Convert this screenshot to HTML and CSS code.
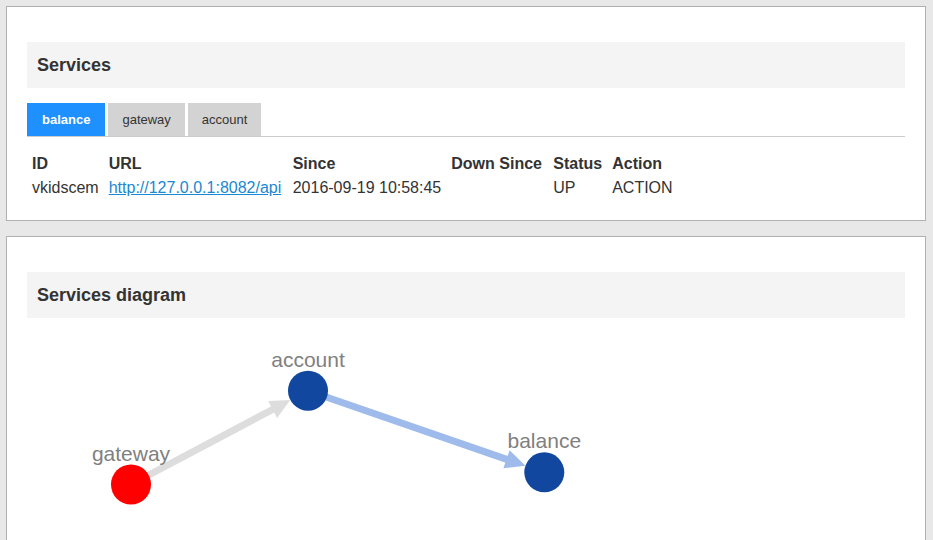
FILE: index.html
```html
<!DOCTYPE html>
<html>
<head>
<meta charset="utf-8">
<title>Services</title>
<link rel="stylesheet" href="styles.css">
</head>
<body>
<section class="panel">
  <h2 class="panel-title">Services</h2>
  <div class="tabs">
    <span class="tab active">balance</span>
    <span class="tab">gateway</span>
    <span class="tab">account</span>
  </div>
  <table class="services">
    <thead>
      <tr><th class="c-id">ID</th><th class="c-url">URL</th><th class="c-since">Since</th><th class="c-down">Down Since</th><th class="c-status">Status</th><th>Action</th></tr>
    </thead>
    <tbody>
      <tr><td>vkidscem</td><td><a href="#">http://127.0.0.1:8082/api</a></td><td>2016-09-19 10:58:45</td><td></td><td>UP</td><td>ACTION</td></tr>
    </tbody>
  </table>
</section>
<section class="panel">
  <h2 class="panel-title">Services diagram</h2>
  <svg class="diagram" width="878" height="260" viewBox="0 0 878 260">
    <line x1="104" y1="166.5" x2="246.5" y2="91" stroke="#dddddd" stroke-width="7"/>
    <polygon points="263.3,82.1 250.1,99.9 241.2,83.1" fill="#dddddd"/>
    <line x1="281" y1="72.7" x2="480.5" y2="141.6" stroke="#9ebbeb" stroke-width="7"/>
    <polygon points="498.4,147.8 476.4,150.3 482.6,132.3" fill="#9ebbeb"/>
    <circle cx="104" cy="166.5" r="20" fill="#ff0000"/>
    <circle cx="281" cy="72.7" r="20" fill="#11479e"/>
    <circle cx="517.3" cy="154.3" r="20" fill="#11479e"/>
    <text class="node-label" x="104" y="143">gateway</text>
    <text class="node-label" x="281" y="49">account</text>
    <text class="node-label" x="517.3" y="130">balance</text>
  </svg>
</section>
</body>
</html>
```
FILE: styles.css
```css
html { background: #e8e8e8; }
body {
  margin: 6px 7px 6px 6px;
  font-family: "Liberation Sans", Arial, sans-serif;
  color: #333;
  background: #e8e8e8;
}
.panel {
  background: #fff;
  border: 1px solid #b0b0b0;
  padding: 35px 20px 20px 20px;
  margin-bottom: 15px;
}
.panel-title {
  margin: 0;
  background: #f4f4f4;
  height: 46px;
  line-height: 46px;
  padding-left: 10px;
  font-size: 18px;
  font-weight: bold;
  color: #333;
}
.tabs {
  display: flex;
  gap: 3px;
  margin-top: 15px;
  border-bottom: 1px solid #cccccc;
}
.tab {
  display: block;
  height: 33px;
  line-height: 33px;
  padding: 0 14px;
  background: #d3d3d3;
  font-size: 13px;
  color: #333;
}
.tab.active {
  padding: 0 15px;
  background: #1e90ff;
  color: #fff;
  font-weight: bold;
}
.services {
  border-collapse: collapse;
  margin-top: 15px;
  font-size: 16px;
}
.services th, .services td {
  padding: 3px 5px;
  text-align: left;
  line-height: 18px;
  white-space: nowrap;
}
.services th { font-weight: bold; color: #333; }
.services .c-id { width: 66px; }
.services .c-url { width: 174px; }
.services .c-since { width: 148px; }
.services .c-down { width: 92px; }
.services .c-status { width: 47px; }
.services a { color: #1a88d2; }
.diagram { display: block; }
.node-label {
  font-family: "Liberation Sans", Arial, sans-serif;
  font-size: 21px;
  fill: #808080;
  text-anchor: middle;
}
```
